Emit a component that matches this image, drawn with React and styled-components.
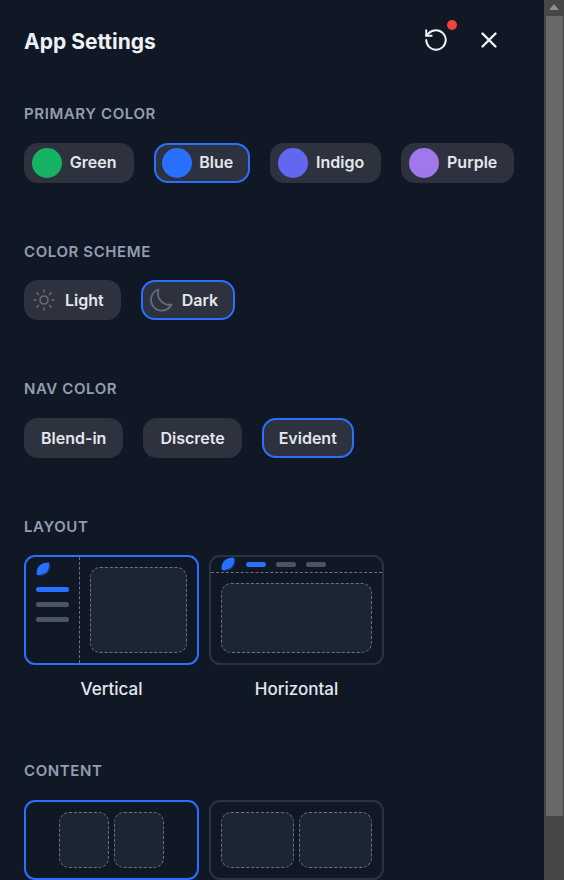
import React from 'react';
import styled, { createGlobalStyle } from 'styled-components';
import { RotateCcw, X, Sun } from 'lucide-react';

const GlobalStyle = createGlobalStyle`
  html, body {
    margin: 0;
    height: 100%;
    overflow: hidden;
    background: #111825;
  }
`;

const Page = styled.div`
  display: flex;
  height: 100vh;
  font-family: Inter, "Liberation Sans", sans-serif;
`;

const Panel = styled.div`
  flex: 1;
  min-width: 0;
  overflow: hidden;
  padding: 0 24px;
  background: #111825;
`;

const Header = styled.div`
  display: flex;
  align-items: center;
  height: 80px;
  margin-bottom: 24px;
`;

const Title = styled.h1`
  flex: 1;
  margin: 2px 0 0;
  font-size: 21px;
  font-weight: 700;
  color: #edf0f5;
`;

const HeaderActions = styled.div`
  display: flex;
  align-items: center;
  gap: 27px;
  margin-right: 18px;
`;

const IconButton = styled.button`
  position: relative;
  display: flex;
  width: 26px;
  height: 26px;
  padding: 0;
  border: none;
  background: none;
  color: #f1f3f6;
`;

const Dot = styled.span`
  position: absolute;
  top: -7px;
  right: -8px;
  width: 10px;
  height: 10px;
  border-radius: 50%;
  background: #f04438;
`;

const Section = styled.section`
  margin-bottom: ${(p) => p.$gap}px;
`;

const Label = styled.h2`
  margin: 0 0 18.6px;
  font-size: 15px;
  line-height: 20px;
  font-weight: 600;
  letter-spacing: 0.6px;
  text-transform: uppercase;
  color: #929eb0;
`;

const PillRow = styled.div`
  display: flex;
  gap: 20px;
`;

const Pill = styled.button`
  display: flex;
  align-items: center;
  gap: ${(p) => (p.$hasIcon ? p.$gap : 0)}px;
  height: 40px;
  box-sizing: border-box;
  padding: ${(p) => (p.$hasIcon ? '0 15px 0 6px' : '0 15px')};
  border: 2px solid ${(p) => (p.$active ? '#2970ff' : '#2d323e')};
  border-radius: 14px;
  background: #2d323e;
  font-family: inherit;
  font-size: 16px;
  font-weight: 600;
  color: #e4e7ec;
`;

const Swatch = styled.span`
  width: 30px;
  height: 30px;
  border-radius: 50%;
  background: ${(p) => p.$color};
`;

const SwatchName = styled.span`
  margin-bottom: 1px;
`;

const CardRow = styled.div`
  display: flex;
  gap: 10px;
`;

const Option = styled.div`
  display: flex;
  flex-direction: column;
  align-items: center;
  width: 175px;
`;

const Card = styled.div`
  display: flex;
  flex-direction: ${(p) => p.$direction || 'row'};
  width: 100%;
  height: ${(p) => p.$height}px;
  box-sizing: border-box;
  border: 2px solid ${(p) => (p.$active ? '#2970ff' : '#2a3240')};
  border-radius: 11px;
`;

const OptionName = styled.div`
  margin-top: 14px;
  font-size: 17px;
  line-height: 20px;
  font-weight: 500;
  color: #e4e7ec;
`;

const Side = styled.div`
  display: flex;
  flex-direction: column;
  gap: 10px;
  width: 54px;
  box-sizing: border-box;
  padding: 5px 10px 0 10px;
  border-right: 1px dashed #6b7280;
`;

const Top = styled.div`
  display: flex;
  align-items: center;
  gap: 10px;
  height: 15px;
  padding: 0 10px;
  border-bottom: 1px dashed #6b7280;
`;

const Bar = styled.span`
  flex: ${(p) => (p.$fixed ? '0 0 20px' : 'none')};
  height: 5px;
  border-radius: 3px;
  background: ${(p) => (p.$active ? '#2970ff' : '#4b5563')};
`;

const SideBars = styled.div`
  display: flex;
  flex-direction: column;
  gap: 10px;
`;

const Fill = styled.div`
  flex: 1;
  display: flex;
  justify-content: ${(p) => p.$justify || 'stretch'};
  gap: 5px;
  padding: 10px;
`;

const Box = styled.div`
  flex: ${(p) => (p.$width ? `0 0 ${p.$width}px` : '1')};
  box-sizing: border-box;
  border: 1px dashed #6b7280;
  border-radius: 10px;
  background: #1c2534;
`;

const Scrollbar = styled.div`
  position: relative;
  flex: 0 0 20px;
  background: #464646;
`;

const ScrollArrow = styled.span`
  position: absolute;
  top: 4px;
  left: 5px;
  border-left: 5px solid transparent;
  border-right: 5px solid transparent;
  border-bottom: 6px solid #8f8f8f;
`;

const ScrollThumb = styled.div`
  position: absolute;
  top: 16px;
  left: 2px;
  width: 17px;
  height: 800px;
  background: #686868;
`;

const Moon = () => (
  <svg width="24" height="24" viewBox="0 0 24 24" fill="none" stroke="#666c78" strokeWidth="1.8" strokeLinejoin="round">
    <path d="M9.5 1.5A10.8 10.8 0 1 0 22.5 16.5 11.5 11.5 0 0 1 9.5 1.5Z" />
  </svg>
);

const Leaf = ({ size }) => (
  <svg width={size} height={size} viewBox="0 0 16 16" style={{ flex: 'none' }}>
    <path d="M15.5 2.5C16 8 14 14.5 3 15.5L2 14 14 2Z" fill="#1d3160" />
    <path d="M14 .6C14.5 4 13.8 7 12.4 9.2 10.6 12 7 13.6.8 13.8.4 10 1.2 6.8 3 4.6 5 2 8.6.9 14 .6Z" fill="#2970ff" />
  </svg>
);

const primaryColors = [
  { name: 'Green', color: '#16b364' },
  { name: 'Blue', color: '#2970ff', active: true },
  { name: 'Indigo', color: '#6366f1' },
  { name: 'Purple', color: '#a078ec' },
];

const navColors = [
  { name: 'Blend-in' },
  { name: 'Discrete' },
  { name: 'Evident', active: true },
];

const App = () => {
  return (
    <Page>
      <GlobalStyle />
      <Panel>
        <Header>
          <Title>App Settings</Title>
          <HeaderActions>
            <IconButton>
              <RotateCcw size={26} strokeWidth={1.8} />
              <Dot />
            </IconButton>
            <IconButton>
              <X size={26} strokeWidth={2.2} />
            </IconButton>
          </HeaderActions>
        </Header>

        <Section $gap={59.2}>
          <Label>Primary Color</Label>
          <PillRow>
            {primaryColors.map((c) => (
              <Pill key={c.name} $hasIcon $gap={7.8} $active={c.active}>
                <Swatch $color={c.color} />
                <SwatchName>{c.name}</SwatchName>
              </Pill>
            ))}
          </PillRow>
        </Section>

        <Section $gap={58.6}>
          <Label>Color Scheme</Label>
          <PillRow>
            <Pill $hasIcon $gap={9}>
              <Sun size={24} strokeWidth={1.6} color="#666c78" />
              Light
            </Pill>
            <Pill $hasIcon $gap={9} $active>
              <Moon />
              Dark
            </Pill>
          </PillRow>
        </Section>

        <Section $gap={59.2}>
          <Label>Nav Color</Label>
          <PillRow>
            {navColors.map((n) => (
              <Pill key={n.name} $active={n.active}>
                {n.name}
              </Pill>
            ))}
          </PillRow>
        </Section>

        <Section $gap={61.6}>
          <Label>Layout</Label>
          <CardRow>
            <Option>
              <Card $active $height={110}>
                <Side>
                  <Leaf size={15} />
                  <SideBars>
                    <Bar $active />
                    <Bar />
                    <Bar />
                  </SideBars>
                </Side>
                <Fill>
                  <Box />
                </Fill>
              </Card>
              <OptionName>Vertical</OptionName>
            </Option>
            <Option>
              <Card $height={110} $direction="column">
                <Top>
                  <Leaf size={15} />
                  <Bar $fixed $active />
                  <Bar $fixed />
                  <Bar $fixed />
                </Top>
                <Fill>
                  <Box />
                </Fill>
              </Card>
              <OptionName>Horizontal</OptionName>
            </Option>
          </CardRow>
        </Section>

        <Section $gap={40}>
          <Label>Content</Label>
          <CardRow>
            <Option>
              <Card $active $height={80}>
                <Fill $justify="center">
                  <Box $width={50} />
                  <Box $width={50} />
                </Fill>
              </Card>
            </Option>
            <Option>
              <Card $height={80}>
                <Fill>
                  <Box />
                  <Box />
                </Fill>
              </Card>
            </Option>
          </CardRow>
        </Section>
      </Panel>
      <Scrollbar>
        <ScrollArrow />
        <ScrollThumb />
      </Scrollbar>
    </Page>
  );
};

export default App;
